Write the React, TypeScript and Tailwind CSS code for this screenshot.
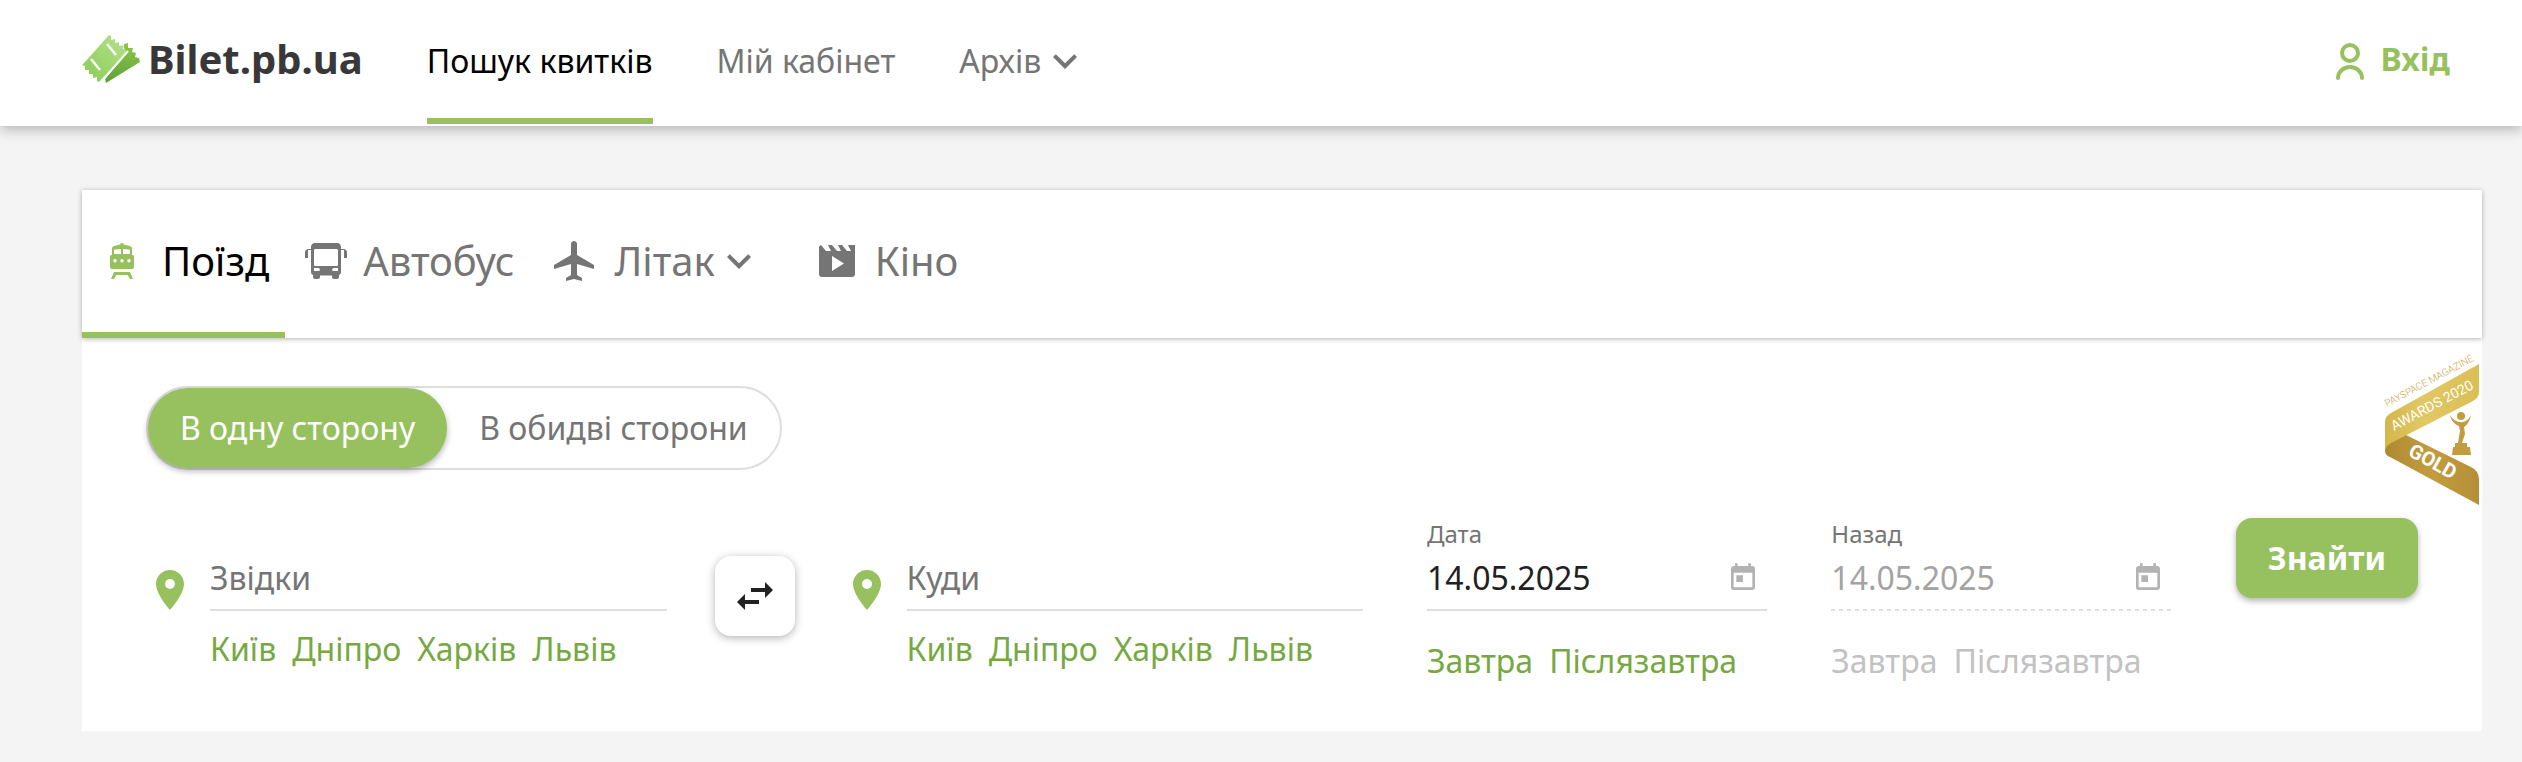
import { MdExpandMore, MdLocalAirport, MdPlace, MdSwapHoriz, MdToday } from "react-icons/md";

const cities = ["Київ", "Дніпро", "Харків", "Львів"];
const days = ["Завтра", "Післязавтра"];

function LogoMark() {
  return (
    <svg viewBox="0 0 58 48" className="h-12 w-[58px]" aria-hidden="true">
      <defs>
        <linearGradient id="ticketLight" x1="1" y1="0" x2="0" y2="1">
          <stop offset="0" stopColor="#b4e38c" />
          <stop offset="1" stopColor="#8aca55" />
        </linearGradient>
        <linearGradient id="ticketDark" x1="0.6" y1="0" x2="0.4" y2="1">
          <stop offset="0" stopColor="#8cc54a" />
          <stop offset="1" stopColor="#5fa336" />
        </linearGradient>
      </defs>
      <path
        fill="url(#ticketLight)"
        d="M27 0l2 1v4l4-1v4l4-1v4l4-1v4l4 0-1 4L17 47l-2-1v-4l-4 1v-4l-4 0 0-4-4 0 0-4-3-1 3-3z"
      />
      <path
        fill="url(#ticketDark)"
        d="M42 13l0-4 4-1 0 5 5 0-1 4 4 1-1 4 4 1 1 4-34 21-1-4 22-27z"
      />
      <path d="M46 16L20 46" stroke="#fff" strokeWidth="2" />
      <path d="M25 9l9 11M9 24l9 11" stroke="#fff" strokeWidth="2.5" />
    </svg>
  );
}

function PersonIcon() {
  return (
    <svg viewBox="0 0 28 38" fill="none" stroke="currentColor" strokeWidth="4" strokeLinecap="round" className="mt-1 h-[38px] w-7" aria-hidden="true">
      <circle cx="14" cy="11" r="8" />
      <path d="M2 36a12 11 0 0 1 24 0" />
    </svg>
  );
}

function TrainIcon() {
  return (
    <svg viewBox="0 0 24 36" fill="currentColor" className="h-9 w-6" aria-hidden="true">
      <path
        fillRule="evenodd"
        d="M12 0c1.200 0 1.600.6 1.800 1.600C17 2 20 3 22 4.500V12h.5c.8 0 1.500.7 1.500 1.500V24c0 1.200-.8 2-2 2H2c-1.200 0-2-.8-2-2V13.500C0 12.700.7 12 1.500 12H2V4.500C4 3 7 2 10.200 1.600 10.400.6 10.800 0 12 0zM5 6.500c-.6 0-1 .4-1 1V10c0 .6.400 1 1 1h6V6zm8 -.5v5h6c.6 0 1-.4 1-1V7.500c0-.6-.4-1-1-1zM5 16a1.700 1.700 0 1 0 .01 0zM12 16a1.700 1.700 0 1 0 .01 0zM19 16a1.700 1.700 0 1 0 .01 0z"
      />
      <path d="M4 29h16v3H4z" />
      <path d="M4 29h4l-4 7H1zM20 29h-4l4 7h3z" />
    </svg>
  );
}

function BusIcon() {
  return (
    <svg viewBox="0 0 42 36" fill="currentColor" className="h-9 w-[42px]" aria-hidden="true">
      <path
        fillRule="evenodd"
        d="M10 0h22c2.500 0 4 2 4 4v25c0 1.500-.8 2.500-2 3v2c0 1-1 2-2 2h-3c-1 0-2-1-2-2v-1.500H15V34c0 1-1 2-2 2h-3c-1 0-2-1-2-2v-2c-1.200-.5-2-1.500-2-3V4c0-2 1.500-4 4-4zM10.500 6C9.500 6 9 6.500 9 7.500v14c0 1 .5 1.500 1.500 1.500h21c1 0 1.500-.5 1.500-1.500v-14c0-1-.5-1.500-1.500-1.500zM9 25v3h4c1.500 0 2-.6 2-1.500S14 25 12 25zM33 25v3h-4c-1.500 0-2-.6-2-1.500S28 25 30 25z"
      />
      <path d="M7 7H3v8H0V9.500C0 7.500 1.500 6 3.500 6H7zM35 7h4v8h3V9.500C42 7.500 40.500 6 38.500 6H35z" />
    </svg>
  );
}

function CinemaIcon() {
  return (
    <svg viewBox="0 0 36 32" fill="currentColor" className="h-8 w-9" aria-hidden="true">
      <path
        fillRule="evenodd"
        d="M2 0l5 6h5L9 0h4l5 6h4l-3-6h4l5 6h4l-3-6h7v29c0 1.700-1.300 3-3 3H3c-1.700 0-3-1.300-3-3V3c0-1.500.8-2.600 2-3zM13 11v15l12-7.500z"
      />
    </svg>
  );
}

function PlaceField({ id, label }: { id: string; label: string }) {
  return (
    <div className="flex min-w-0 flex-[52]">
      <MdPlace className="mt-12 mr-4 size-12 shrink-0 text-[#97c15e]" />
      <div className="min-w-0 flex-1 pt-9">
        <input
          id={id}
          aria-label={label}
          placeholder={label}
          className="block h-[57px] w-full border-b-2 border-[#dedede] pb-2 outline-none placeholder:text-[#757575]"
        />
        <div className="mt-4 flex gap-4 text-[#76a942]">
          {cities.map(city => (
            <button key={city} type="button">{city}</button>
          ))}
        </div>
      </div>
    </div>
  );
}

function DateField({ id, label, disabled = false }: { id: string; label: string; disabled?: boolean }) {
  return (
    <div className="min-w-0 flex-[34]">
      <label htmlFor={id} className="block h-9 text-2xl leading-8 text-[#757575]">{label}</label>
      <div className="flex h-[55px] items-center pb-2">
        <input
          id={id}
          defaultValue="14.05.2025"
          disabled={disabled}
          className="min-w-0 flex-1 text-[#212121] outline-none disabled:text-[#a3a3a3]"
        />
        <MdToday className="mr-2 size-8 shrink-0 text-[#b3b3b3]" />
      </div>
      <div
        className={
          disabled
            ? "h-[2px] bg-[repeating-linear-gradient(to_right,#dedede_0_4px,transparent_4px_8px)]"
            : "h-[2px] bg-[#dedede]"
        }
      />
      <div className={`mt-7 flex gap-4 ${disabled ? "text-[#c2c2c2]" : "text-[#76a942]"}`}>
        {days.map(day => (
          <button key={day} type="button" disabled={disabled}>{day}</button>
        ))}
      </div>
    </div>
  );
}

function Award() {
  return (
    <svg viewBox="0 0 94 152" className="absolute top-4 right-[3px] h-[152px] w-[94px] overflow-visible" aria-label="PaySpace Magazine Awards 2020 Gold">
      <defs>
        <linearGradient id="goldLight" x1="0" x2="1">
          <stop offset="0" stopColor="#d4b64b" />
          <stop offset="0.4" stopColor="#e0c863" />
          <stop offset="1" stopColor="#dabf55" />
        </linearGradient>
        <linearGradient id="goldDark" x1="0" x2="1">
          <stop offset="0" stopColor="#ae8a30" />
          <stop offset="0.5" stopColor="#c39c3f" />
          <stop offset="1" stopColor="#b48f38" />
        </linearGradient>
      </defs>
      <path d="M0 97C0 90 5 85 21 81L86 113q8 4 8 12v26L5 103q-5-2-5-6z" fill="url(#goldDark)" />
      <path d="M0 97V68q0-6 6-9L94 10v28q0 6-6 9L8 88q-8 4-8 9z" fill="url(#goldLight)" />
      <g fontFamily="Roboto, sans-serif">
        <text transform="translate(2 53) rotate(-28)" fontSize="10" fontWeight="300" fill="#c9a63f">PAYSPACE MAGAZINE</text>
        <text transform="translate(9 77) rotate(-28)" fontSize="14" fontWeight="400" fill="#fff">AWARDS 2020</text>
        <text transform="translate(22 101) rotate(29)" fontSize="20" fontWeight="700" fill="#fff">GOLD</text>
      </g>
      <g fill="#c39c3f">
        <circle cx="76" cy="62" r="4" />
        <path d="M65 61c3 5 8 8 13 7 4-1 6-3 8-7-1 6-4 10-7 12l1 7-3 9h-4l2-12-1-5c-5-2-8-6-9-11z" />
        <path d="M70 89h12v4h3l1 8H67l1-8h2z" />
      </g>
    </svg>
  );
}

export default function App() {
  return (
    <div className="min-h-screen bg-[#f4f4f4] font-['Noto_Sans',sans-serif] text-[32px] leading-11 text-[#757575]">
      <header className="flex h-[126px] items-stretch bg-white pr-[72px] pl-[82px] shadow-[0_4px_12px_rgba(0,0,0,0.25)]">
        <a href="#" className="mr-16 flex items-center gap-2 pb-2">
          <LogoMark />
          <span className="text-[40px] font-bold text-[#383838]">Bilet.pb.ua</span>
        </a>
        <nav className="flex gap-16 pb-[2px]">
          <a href="#" className="flex items-center border-b-6 border-[#97c15e] pt-1 text-black">Пошук квитків</a>
          <a href="#" className="flex items-center border-b-6 border-transparent pt-1">Мій кабінет</a>
          <a href="#" className="flex items-center border-b-6 border-transparent pt-1">
            Архів
            <MdExpandMore className="size-12" />
          </a>
        </nav>
        <a href="#" className="ml-auto flex items-center gap-4 pb-2 font-bold text-[#97c15e]">
          <PersonIcon />
          Вхід
        </a>
      </header>

      <main className="mt-16 mr-10 ml-[82px] pb-[30px]">
        <nav className="relative z-10 flex h-[148px] bg-white text-[40px] shadow-[0_1px_5px_rgba(0,0,0,0.3)]">
          <a href="#" className="flex items-center gap-7 border-b-6 border-[#97c15e] pr-4 pl-7 text-black">
            <span className="text-[#97c15e]"><TrainIcon /></span>
            Поїзд
          </a>
          <a href="#" className="flex items-center gap-4 pb-[6px] pl-5">
            <BusIcon />
            Автобус
          </a>
          <a href="#" className="flex items-center gap-4 pb-[6px] pl-9">
            <MdLocalAirport className="size-12" />
            <span className="flex items-center">
              Літак
              <MdExpandMore className="size-12" />
            </span>
          </a>
          <a href="#" className="flex items-center gap-5 pb-[6px] pl-14">
            <CinemaIcon />
            Кіно
          </a>
        </nav>

        <form className="relative bg-white px-16 pt-12 pb-12">
          <div className="flex w-fit rounded-full border-2 border-[#dedede]">
            <button type="button" className="h-20 rounded-full bg-[#97c15e] px-8 text-white shadow-[0_3px_6px_rgba(0,0,0,0.3)]">
              В одну сторону
            </button>
            <button type="button" className="h-20 rounded-full px-8">В обидві сторони</button>
          </div>

          <div className="mt-12 flex gap-16">
            <PlaceField id="from" label="Звідки" />
            <button
              type="button"
              aria-label="Поміняти місцями"
              className="-mx-4 mt-[38px] flex size-20 shrink-0 items-center justify-center rounded-2xl text-[#212121] shadow-[0_2px_8px_rgba(0,0,0,0.3)]"
            >
              <MdSwapHoriz className="size-12" />
            </button>
            <PlaceField id="to" label="Куди" />
            <DateField id="date" label="Дата" />
            <DateField id="back" label="Назад" disabled />
            <button
              type="submit"
              className="h-20 shrink-0 rounded-2xl bg-[#97c15e] px-8 font-bold text-white shadow-[0_3px_6px_rgba(0,0,0,0.3)]"
            >
              Знайти
            </button>
          </div>

          <Award />
        </form>
      </main>
    </div>
  );
}
